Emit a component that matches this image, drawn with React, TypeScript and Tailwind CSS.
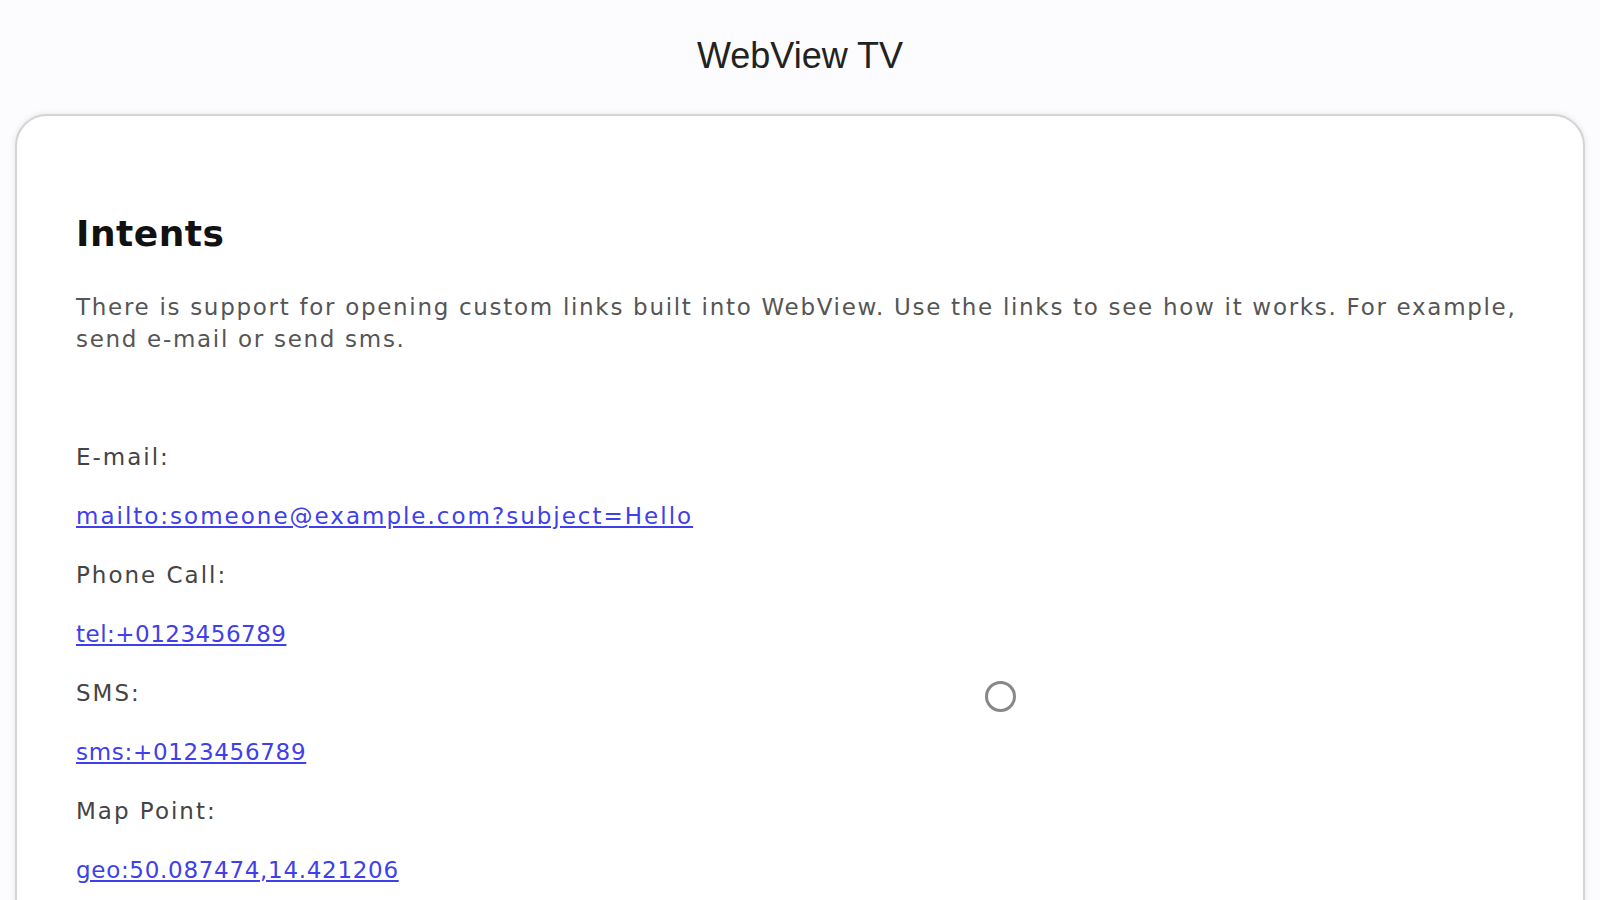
import React from "react";

const items = [
  { label: "E-mail:", href: "mailto:someone@example.com?subject=Hello", tr: "tracking-[2px]" },
  { label: "Phone Call:", href: "tel:+0123456789", tr: "tracking-[0.5px]" },
  { label: "SMS:", href: "sms:+0123456789", tr: "tracking-[0.7px]" },
  { label: "Map Point:", href: "geo:50.087474,14.421206", tr: "tracking-[0.7px]" },
];

export default function App() {
  return (
    <div className="relative h-[900px] w-[1600px] overflow-hidden bg-[#fcfcfe]">
      <header className="flex h-[114px] items-start justify-center pt-[34px]">
        <h1 className="text-[36px] leading-[44px] text-[#222] font-['Liberation_Sans',Arial,sans-serif]">
          WebView TV
        </h1>
      </header>
      <main className="mx-[15px] h-[900px] rounded-t-[32px] border-2 border-[#d4d4d4] bg-white px-[59px] pt-[96px] shadow-[0_0_6px_rgba(0,0,0,0.1)] font-['DejaVu_Sans',sans-serif]">
        <h2 className="text-[36px] font-bold leading-[44px] tracking-[0.5px] text-[#111]">Intents</h2>
        <p className="mt-[35px] text-[23px] leading-[32px] tracking-[1.7px] text-[#555]">
          There is support for opening custom links built into WebView. Use the links to see how it works. For example,
          <br />
          send e-mail or send sms.
        </p>
        <div className="mt-[87px] flex flex-col">
          {items.map((it) => (
            <React.Fragment key={it.label}>
              <div className="h-[59px] text-[23px] leading-[30px] tracking-[2px] text-[#444]">{it.label}</div>
              <div className={`h-[59px] text-[23px] leading-[30px] ${it.tr}`}>
                <a href={it.href} className="text-[#4040ea] underline">
                  {it.href}
                </a>
              </div>
            </React.Fragment>
          ))}
        </div>
      </main>
      <div className="absolute left-[985px] top-[681px] h-[31px] w-[31px] rounded-full border-[3px] border-[#6a6a6a] opacity-80" />
    </div>
  );
}
